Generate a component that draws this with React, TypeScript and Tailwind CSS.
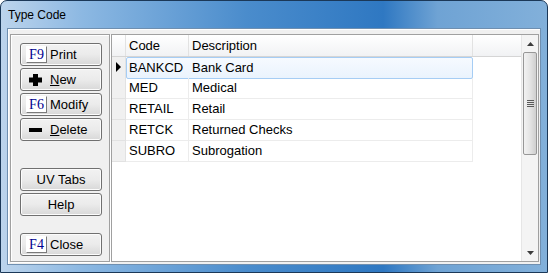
const rows = [
  { code: "BANKCD", desc: "Bank Card" },
  { code: "MED", desc: "Medical" },
  { code: "RETAIL", desc: "Retail" },
  { code: "RETCK", desc: "Returned Checks" },
  { code: "SUBRO", desc: "Subrogation" },
];

function KeyBox({ k }: { k: string }) {
  return (
    <span className="flex h-[17px] w-[21px] items-center justify-center border border-[#7a7a7a] border-l-white border-t-white bg-white text-[14px] leading-none text-[#000090] [font-family:'Liberation_Serif',serif]">
      {k}
    </span>
  );
}

function Btn({
  children,
  center,
}: {
  children: React.ReactNode;
  center?: boolean;
}) {
  return (
    <div
      className={`flex h-[23px] w-[82px] items-center gap-[3px] rounded-[3px] border border-[#707070] bg-gradient-to-b from-[#f2f2f2] via-[#ebebeb] to-[#d8d8d8] text-[13px] text-black shadow-[inset_0_0_0_1px_#fcfcfc] ${
        center ? "justify-center" : "pl-[5px]"
      }`}
    >
      {children}
    </div>
  );
}

function Plus() {
  return (
    <svg width="21" height="14" viewBox="0 0 21 14">
      <rect x="7" y="1" width="5" height="12" fill="#000" />
      <rect x="3" y="4.5" width="13" height="5" fill="#000" />
    </svg>
  );
}

function Minus() {
  return (
    <svg width="21" height="14" viewBox="0 0 21 14">
      <rect x="3" y="5" width="13" height="4" fill="#000" />
    </svg>
  );
}

function ScrollBar() {
  return (
    <div className="flex h-full w-[17px] flex-col bg-[#f4f4f4] border-l border-[#e6e6e6]">
      <div className="flex h-[17px] items-center justify-center">
        <svg width="7" height="4" viewBox="0 0 7 4">
          <path d="M0 4 L3.5 0 L7 4 Z" fill="#3c3c3c" />
        </svg>
      </div>
      <div className="mx-[1px] flex h-[103px] items-center justify-center rounded-[2px] border border-[#979797] bg-gradient-to-r from-[#f2f2f2] via-[#e4e4e4] to-[#cfcfcf]">
        <div className="flex flex-col gap-[1px]">
          <div className="h-px w-[7px] bg-[#5a5a5a]" />
          <div className="h-px w-[7px] bg-[#5a5a5a]" />
          <div className="h-px w-[7px] bg-[#5a5a5a]" />
          <div className="h-px w-[7px] bg-[#5a5a5a]" />
        </div>
      </div>
      <div className="flex-1" />
      <div className="flex h-[17px] items-center justify-center">
        <svg width="7" height="4" viewBox="0 0 7 4">
          <path d="M0 0 L7 0 L3.5 4 Z" fill="#3c3c3c" />
        </svg>
      </div>
    </div>
  );
}

export default function App() {
  return (
    <div className="h-[273px] w-[548px] overflow-hidden bg-white [font-family:'Liberation_Sans',Arial,sans-serif]">
      <div className="flex h-full w-full flex-col rounded-t-[7px] border border-[#1b3858] bg-[linear-gradient(90deg,#bcd4ec_0%,#8cb8e2_15%,#4a8ccc_45%,#2f78c2_70%,#6fa3d4_80%,#82b0da_100%)]">
        <div className="flex h-[27px] items-center pl-[7px] pt-[1px] text-[12px] text-black">
          Type Code
        </div>
        <div className="mx-[6px] mb-[7px] flex flex-1 gap-px border border-[#6f8fb0] bg-[#f0f0f0] pb-[2px] pl-[2px] pr-[1px] pt-[5px] shadow-[inset_1px_1px_0_#ffffff]">
          <div className="flex w-[100px] flex-col border border-[#a0a0a0] shadow-[inset_1px_1px_0_#ffffff,1px_1px_0_#ffffff] pl-[9px] pt-[8px]">
            <div className="flex flex-col gap-[2px]">
              <Btn>
                <KeyBox k="F9" />
                <span>Print</span>
              </Btn>
              <Btn>
                <Plus />
                <span>
                  <u>N</u>ew
                </span>
              </Btn>
              <Btn>
                <KeyBox k="F6" />
                <span>Modify</span>
              </Btn>
              <Btn>
                <Minus />
                <span>
                  <u>D</u>elete
                </span>
              </Btn>
            </div>
            <div className="mt-[27px] flex flex-col gap-[2px]">
              <Btn center>UV Tabs</Btn>
              <Btn center>Help</Btn>
            </div>
            <div className="mt-[17px]">
              <Btn>
                <KeyBox k="F4" />
                <span>Close</span>
              </Btn>
            </div>
          </div>
          <div className="flex flex-1 border border-[#a0a0a0] bg-white">
            <div className="flex-1 text-[13px] text-black">
              <div className="grid h-[22px] grid-cols-[14px_63px_284px] border-b border-[#d5d5d5] bg-gradient-to-b from-white to-[#f1f2f4]">
                <div className="border-r border-[#e2e2e2]" />
                <div className="flex items-center border-r border-[#e2e2e2] pl-[3px]">
                  Code
                </div>
                <div className="flex items-center border-r border-[#e2e2e2] pl-[3px]">
                  Description
                </div>
              </div>
              {rows.map((r, i) => (
                <div
                  key={r.code}
                  className="grid h-[21px] grid-cols-[14px_347px]"
                >
                  <div className="flex items-center justify-center border-b border-r border-[#e2e2e2] bg-[#f0f0f0]">
                    {i === 0 && (
                      <svg width="5" height="10" viewBox="0 0 5 10">
                        <path d="M0 0 L5 5 L0 10 Z" fill="#000" />
                      </svg>
                    )}
                  </div>
                  {i === 0 ? (
                    <div className="grid grid-cols-[63px_284px] rounded-[2px] border border-[#a6cdf4] bg-gradient-to-b from-[#f6faff] to-[#eaf3fd]">
                      <div className="flex items-center pl-[2px]">
                        {r.code}
                      </div>
                      <div className="flex items-center pl-[2px]">
                        {r.desc}
                      </div>
                    </div>
                  ) : (
                    <div className="grid grid-cols-[63px_284px] border-b border-[#ececec]">
                      <div className="flex items-center border-r border-[#ececec] pl-[3px]">
                        {r.code}
                      </div>
                      <div className="flex items-center border-r border-[#ececec] pl-[3px]">
                        {r.desc}
                      </div>
                    </div>
                  )}
                </div>
              ))}
            </div>
            <ScrollBar />
          </div>
        </div>
      </div>
    </div>
  );
}
